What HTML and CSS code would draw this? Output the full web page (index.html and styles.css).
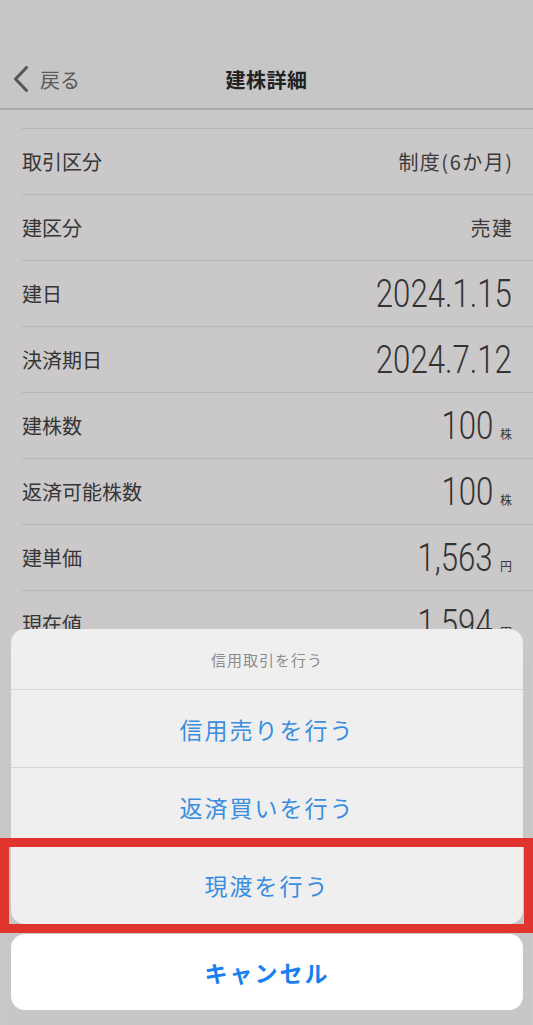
FILE: index.html
```html
<!DOCTYPE html>
<html lang="ja">
<head>
  <meta charset="UTF-8" />
  <meta name="viewport" content="width=device-width, initial-scale=1.0" />
  <title>建株詳細</title>
  <link rel="stylesheet" href="styles.css">
</head>
<body>
  <div class="screen">
    <header class="navbar">
      <a class="back">
        <svg class="chevron" viewBox="0 0 16 26" width="16" height="26"><path d="M13.5 1.5 L2.5 13 L13.5 24.5" /></svg>
        <span>戻る</span>
      </a>
      <h1 class="title">建株詳細</h1>
      <span></span>
    </header>

    <main class="detail">
      <ul class="rows">
        <li class="row"><span class="label">取引区分</span><span class="value">制度(6か月)</span></li>
        <li class="row"><span class="label">建区分</span><span class="value">売建</span></li>
        <li class="row"><span class="label">建日</span><span class="amount"><span class="num">2024.1.15</span></span></li>
        <li class="row"><span class="label">決済期日</span><span class="amount"><span class="num">2024.7.12</span></span></li>
        <li class="row"><span class="label">建株数</span><span class="amount"><span class="num">100</span><small>株</small></span></li>
        <li class="row"><span class="label">返済可能株数</span><span class="amount"><span class="num">100</span><small>株</small></span></li>
        <li class="row"><span class="label">建単価</span><span class="amount"><span class="num">1,563</span><small>円</small></span></li>
        <li class="row"><span class="label">現在値</span><span class="amount"><span class="num">1,594</span><small>円</small></span></li>
      </ul>
      <div class="panel"></div>
    </main>

    <div class="overlay">
      <div class="sheet-group">
        <div class="sheet-title">信用取引を行う</div>
        <button class="sheet-item">信用売りを行う</button>
        <button class="sheet-item">返済買いを行う</button>
        <button class="sheet-item last">現渡を行う</button>
      </div>
      <button class="sheet-cancel">キャンセル</button>
      <div class="highlight"></div>
    </div>
  </div>
</body>
</html>
```

FILE: styles.css
```css
* { box-sizing: border-box; }
body { margin: 0; background: #c1c1c1; font-family: "Noto Sans CJK JP", "Noto Sans", sans-serif; color: #333; }
.screen { position: relative; width: 533px; height: 1025px; overflow: hidden; }

.navbar { display: grid; grid-template-columns: 1fr auto 1fr; align-items: center; height: 110px; padding-top: 50px; background: #c6c6c6; border-bottom: 2px solid #ababab; }
.back { display: flex; align-items: center; gap: 11px; padding-left: 13px; color: #5b5b5b; font-size: 20px; }
.chevron path { fill: none; stroke: #555; stroke-width: 3; stroke-linecap: round; stroke-linejoin: round; }
.title { margin: 0; font-size: 20px; font-weight: 700; color: #222; letter-spacing: 0.5px; }

.detail { background: #cac8c9; }
.rows { list-style: none; margin: 0 0 0 22px; padding: 18px 0 0; }
.row { display: flex; align-items: center; justify-content: space-between; height: 66px; padding-right: 21px; border-top: 1px solid #b7b6b6; }
.label { font-size: 20px; color: #363636; }
.value { font-size: 20px; letter-spacing: 1.5px; margin-right: -1.5px; color: #3a3a3a; }
.amount { display: flex; align-items: baseline; }
.num { display: inline-block; font-family: Roboto, sans-serif; font-weight: 300; font-size: 38px; line-height: 1; color: #333; transform: scaleX(0.82); transform-origin: right center; }
.amount small { font-size: 12px; margin-left: 7px; color: #3a3a3a; }
.panel { height: 400px; margin: 0 1px; border-radius: 12px 12px 0 0; background: #c7c7c7; }

.overlay { position: absolute; inset: 0; display: flex; flex-direction: column; justify-content: flex-end; gap: 10px; padding: 0 10px 15px 11px; }
.sheet-group { display: flex; flex-direction: column; background: #efefef; border-radius: 14px; overflow: hidden; }
.sheet-title { height: 61px; display: flex; align-items: center; justify-content: center; font-size: 15px; letter-spacing: 1px; color: #8c8c8c; border-bottom: 1px solid #d5d5d5; }
.sheet-item { height: 78px; border: 0; border-bottom: 1px solid #d5d5d5; background: none; font-family: inherit; font-size: 23px; letter-spacing: 2px; color: #3a8ee0; }
.sheet-item.last { border-bottom: 0; }
.sheet-cancel { height: 76px; border: 0; border-radius: 14px; background: #fff; font-family: inherit; font-size: 23px; font-weight: 700; letter-spacing: 2px; color: #1a7ff0; }
.highlight { position: absolute; left: 0; top: 838px; width: 533px; height: 95px; border: 9px solid #e0342f; }
```
